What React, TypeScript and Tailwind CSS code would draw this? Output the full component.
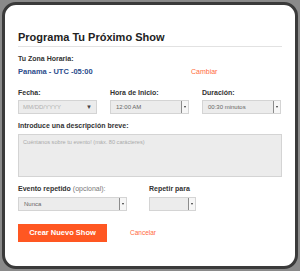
import React from "react";

function SelectBox({ value, className }: { value: string; className: string }) {
  return (
    <div className={`flex h-[14px] items-center border border-[#d4d4d4] bg-[#ececec] ${className}`}>
      <span className="flex-1 pl-[5px] text-[6px] leading-none text-[#666]">{value}</span>
      <span className="flex h-full w-[7px] items-center justify-center border-l border-[#8c8c8c] bg-[#f6f6f6]">
        <span className="h-0 w-0 border-l-[1.5px] border-r-[1.5px] border-t-[2px] border-l-transparent border-r-transparent border-t-[#333]" />
      </span>
    </div>
  );
}

export default function App() {
  return (
    <div className="h-[271px] w-[300px] bg-[#8a8a8a] p-[2px] font-['Liberation_Sans',Arial,sans-serif] text-[#333]">
      <div className="h-[267px] rounded-[14px] border-[3px] border-[#3a3a3a] bg-white px-[13px] pt-[26px]">
        <div className="border-b border-[#e2e2e2] pb-[2px] text-[11px] font-bold leading-[13px] text-[#222]">
          Programa Tu Próximo Show
        </div>
        <div className="mt-[7px] text-[7px] font-bold leading-[9px]">Tu Zona Horaria:</div>
        <div className="mt-[4px] flex h-[10px] items-center">
          <span className="w-[173px] text-[7.5px] font-bold leading-[10px] text-[#2b4c8c]">Panama - UTC -05:00</span>
          <span className="text-[7px] text-[#ff6a3d]">Cambiar</span>
        </div>
        <div className="mt-[11px] flex gap-[13px]">
          <div className="w-[79px]">
            <div className="text-[7px] font-bold leading-[9px]">Fecha:</div>
            <div className="mt-[3px] flex h-[14px] items-center border border-[#d4d4d4] bg-[#ececec] px-[4px]">
              <span className="flex-1 text-[6px] leading-none text-[#b0b0b0]">MM/DD/YYYY</span>
              <span className="text-[6px] leading-none text-[#444]">▼</span>
            </div>
          </div>
          <div className="w-[79px]">
            <div className="text-[7px] font-bold leading-[9px]">Hora de Inicio:</div>
            <SelectBox value="12:00 AM" className="mt-[3px]" />
          </div>
          <div className="w-[79px]">
            <div className="text-[7px] font-bold leading-[9px]">Duración:</div>
            <SelectBox value="00:30 minutos" className="mt-[3px]" />
          </div>
        </div>
        <div className="mt-[7px] text-[7px] font-bold leading-[9px]">Introduce una descripción breve:</div>
        <div className="mt-[4px] h-[43px] border border-[#d4d4d4] bg-[#ececec] px-[4px] pt-[5px] text-[5.6px] leading-none text-[#aaa]">
          Cuéntanos sobre tu evento! (máx. 80 carácteres)
        </div>
        <div className="mt-[7px] flex">
          <div className="w-[131px]">
            <div className="text-[7px] font-bold leading-[9px]">
              Evento repetido <span className="font-normal text-[#777]">(opcional):</span>
            </div>
            <SelectBox value="Nunca" className="mt-[4px] w-[109px]" />
          </div>
          <div>
            <div className="text-[7px] font-bold leading-[9px]">Repetir para</div>
            <SelectBox value="" className="mt-[4px] w-[47px]" />
          </div>
        </div>
        <div className="mt-[13px] flex items-center">
          <button className="h-[18px] w-[89px] bg-[#ff5722] text-[7.5px] font-bold text-white">Crear Nuevo Show</button>
          <span className="ml-[23px] text-[6.5px] text-[#ff6a3d]">Cancelar</span>
        </div>
      </div>
    </div>
  );
}
